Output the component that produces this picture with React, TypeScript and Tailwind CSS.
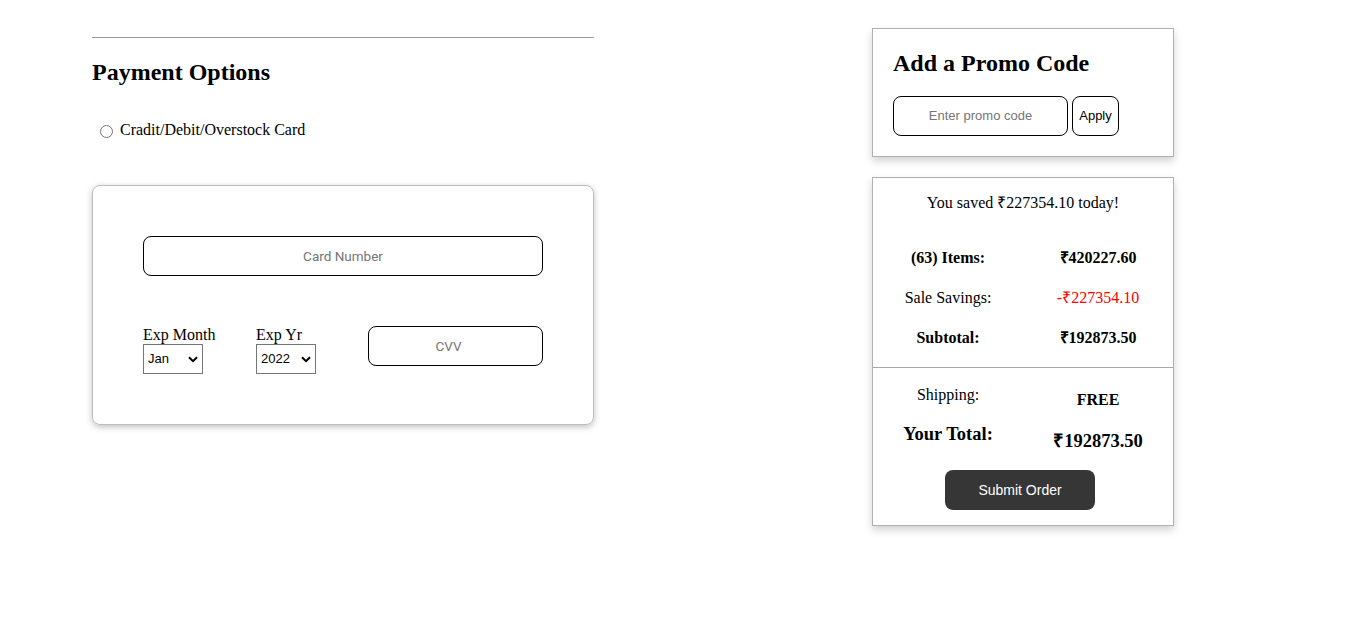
import React from "react";

const serif = { fontFamily: '"Liberation Serif", "Times New Roman", serif' };

export default function App() {
  return (
    <div className="flex min-h-[636px] bg-white text-black" style={serif}>
      {/* Left column */}
      <div className="ml-[92px] w-[502px] pt-[37px]">
        <hr className="border-0 border-t border-[#9a9a9a]" />
        <h2 className="mt-[20px] text-[24px] font-bold leading-[28px]">Payment Options</h2>
        <div className="mt-[35px] flex items-center pl-[8px]">
          <span className="inline-block h-[13px] w-[13px] rounded-full border border-[#767676] bg-white mt-[3px]" />
          <span className="ml-[7px] text-[16px] leading-[18px]">Cradit/Debit/Overstock Card</span>
        </div>
        <div className="mt-[46px] rounded-[8px] border border-[#bdbdbd] p-[50px] shadow-[0_2px_6px_rgba(0,0,0,0.25)]">
          <div className="flex h-[40px] w-[400px] items-center justify-center rounded-[8px] border border-black text-[13.5px] text-[#757575]" style={{ fontFamily: 'Roboto, "Liberation Sans", sans-serif' }}>
            Card Number
          </div>
          <div className="mt-[50px] flex items-start">
            <div className="w-[113px]">
              <div className="text-[16px] leading-[18px]">Exp Month</div>
              <Select value="Jan" />
            </div>
            <div className="w-[112px]">
              <div className="text-[16px] leading-[18px]">Exp Yr</div>
              <Select value="2022" />
            </div>
            <div className="flex h-[40px] w-[175px] items-center justify-center rounded-[8px] border border-black pr-[14px] text-[13.5px] text-[#757575]" style={{ fontFamily: 'Roboto, "Liberation Sans", sans-serif' }}>
              CVV
            </div>
          </div>
        </div>
      </div>

      {/* Right column */}
      <div className="ml-[278px] w-[302px] pt-[28px]">
        <div className="border border-[#b0b0b0] px-[20px] pt-[20px] pb-[20px] shadow-[0_4px_8px_rgba(0,0,0,0.18)]">
          <h2 className="text-[24px] font-bold leading-[28px]">Add a Promo Code</h2>
          <div className="mt-[19px] flex items-center" style={{ fontFamily: '"Liberation Sans", Arial, sans-serif' }}>
            <div className="flex h-[40px] w-[175px] items-center justify-center rounded-[8px] border border-black text-[13px] text-[#757575]">
              Enter promo code
            </div>
            <div className="ml-[4px] flex h-[40px] w-[47px] items-center justify-center rounded-[8px] border border-black text-[13px]">
              Apply
            </div>
          </div>
        </div>

        <div className="mt-[20px] border border-[#b0b0b0] pt-[16px] pb-[15px] shadow-[0_4px_8px_rgba(0,0,0,0.18)]">
          <p className="text-center text-[16px] leading-[18px]">You saved ₹227354.10 today!</p>
          <div className="mt-[26px] grid grid-cols-2 text-[16px]">
            <div className="flex h-[40px] items-center justify-center font-bold">(63) Items:</div>
            <div className="flex h-[40px] items-center justify-center font-bold">₹420227.60</div>
            <div className="flex h-[40px] items-center justify-center">Sale Savings:</div>
            <div className="flex h-[40px] items-center justify-center text-[#ff0000]">-₹227354.10</div>
            <div className="flex h-[40px] items-center justify-center font-bold">Subtotal:</div>
            <div className="flex h-[40px] items-center justify-center font-bold">₹192873.50</div>
          </div>
          <hr className="mt-[9px] border-0 border-t border-[#a8a8a8]" />
          <div className="grid grid-cols-2">
            <div className="flex h-[38px] items-center justify-center pt-[16px] text-[16px]">Shipping:</div>
            <div className="flex h-[38px] items-center justify-center pt-[26px] text-[16px] font-bold">FREE</div>
            <div className="flex h-[40px] items-center justify-center pt-[18px] text-[18.5px] font-bold">Your Total:</div>
            <div className="flex h-[40px] items-center justify-center pt-[32px] text-[18.5px] font-bold">₹192873.50</div>
          </div>
          <div className="mt-[24px] flex justify-center pr-[6px]">
            <div className="flex h-[40px] w-[150px] items-center justify-center rounded-[8px] bg-[#363636] text-[14px] text-white" style={{ fontFamily: '"Liberation Sans", Arial, sans-serif' }}>
              Submit Order
            </div>
          </div>
        </div>
      </div>
    </div>
  );
}

function Select({ value }: { value: string }) {
  return (
    <div className="flex h-[30px] w-[60px] items-center justify-between border border-[#767676] bg-white pl-[4px] pr-[4px] text-[13px]" style={{ fontFamily: '"Liberation Sans", Arial, sans-serif' }}>
      <span>{value}</span>
      <svg width="10" height="7" viewBox="0 0 10 7">
        <path d="M1 1.2 L5 5.2 L9 1.2" fill="none" stroke="black" strokeWidth="2" />
      </svg>
    </div>
  );
}
